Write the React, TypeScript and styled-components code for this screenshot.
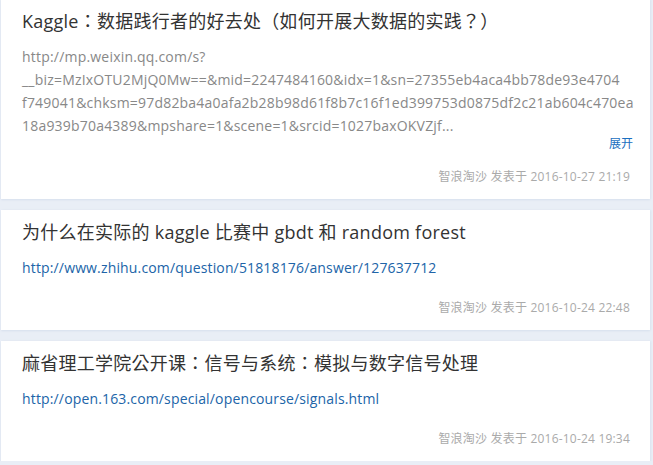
import React from "react";
import styled, { createGlobalStyle } from "styled-components";

const Global = createGlobalStyle`
  html, body { margin: 0; padding: 0; background: #e9eef6; }
  body { font-family: "Open Sans", "Noto Sans CJK TC", sans-serif; }
`;

const List = styled.div`
  display: flex;
  flex-direction: column;
  gap: 11px;
  padding: 0 3px 0 1px;
  margin-top: -1px;
`;

const Card = styled.div`
  background: #fff;
  padding: 9px 20px 13px 21px;
  box-shadow: 0 1px 2px #d8e1ee, 1px 0 2px #dfe6f0;
  display: flex;
  flex-direction: column;
`;

const Title = styled.div`
  font-size: 18px;
  line-height: 26px;
  letter-spacing: 0.25px;
  color: #333;
`;

const Url = styled.div<{ $link?: boolean }>`
  margin-top: 11px;
  font-size: 14px;
  line-height: 23px;
  letter-spacing: ${(p) => (p.$link ? "0.15px" : "0.2px")};
  color: ${(p) => (p.$link ? "#2064a8" : "#888")};
`;

const UrlLine = styled.div`
  white-space: nowrap;
`;

const Toggle = styled.div`
  align-self: flex-end;
  margin-top: -1px;
  margin-right: -3px;
  font-size: 12px;
  line-height: 16px;
  color: #1a6fc0;
`;

const Meta = styled.div<{ $gap: number }>`
  margin-top: ${(p) => p.$gap}px;
  text-align: right;
  font-size: 12px;
  line-height: 18px;
  letter-spacing: 0.2px;
  color: #aaa;
`;

const items = [
  {
    title: "Kaggle：数据践行者的好去处（如何开展大数据的实践？）",
    lines: [
      "http://mp.weixin.qq.com/s?",
      "__biz=MzIxOTU2MjQ0Mw==&mid=2247484160&idx=1&sn=27355eb4aca4bb78de93e4704",
      "f749041&chksm=97d82ba4a0afa2b28b98d61f8b7c16f1ed399753d0875df2c21ab604c470ea",
      "18a939b70a4389&mpshare=1&scene=1&srcid=1027baxOKVZjf...",
    ],
    link: false,
    more: true,
    date: "2016-10-27 21:19",
  },
  {
    title: "为什么在实际的 kaggle 比赛中 gbdt 和 random forest",
    lines: ["http://www.zhihu.com/question/51818176/answer/127637712"],
    link: true,
    more: false,
    date: "2016-10-24 22:48",
  },
  {
    title: "麻省理工学院公开课：信号与系统：模拟与数字信号处理",
    lines: ["http://open.163.com/special/opencourse/signals.html"],
    link: true,
    more: false,
    date: "2016-10-24 19:34",
  },
];

export default function App() {
  return (
    <>
      <Global />
      <List>
        {items.map((it, i) => (
          <Card key={i}>
            <Title>{it.title}</Title>
            <Url $link={it.link}>
              {it.lines.map((l, j) => (
                <UrlLine key={j}>{l}</UrlLine>
              ))}
            </Url>
            {it.more && <Toggle>展开</Toggle>}
            <Meta $gap={it.more ? 16 : 20}>智浪淘沙 发表于 {it.date}</Meta>
          </Card>
        ))}
      </List>
    </>
  );
}
